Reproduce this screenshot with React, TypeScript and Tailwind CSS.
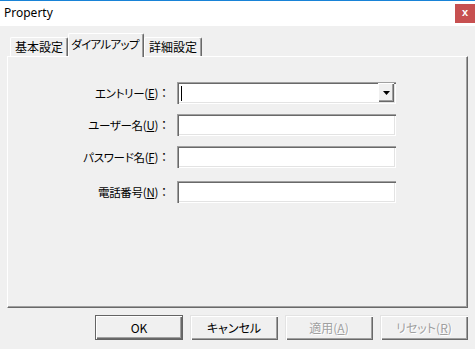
import React from "react";

const jp = "font-['Noto_Sans_CJK_JP','Noto_Sans',sans-serif]";

function Tab({ label, selected, w }: { label: string; selected?: boolean; w: string }) {
  return (
    <div
      className={`${w} ${
        selected ? "h-[24px] -mb-px z-10 pt-[2px]" : "h-[19px] pt-[1px]"
      } relative flex justify-center whitespace-nowrap bg-[#f0f0f0] border-l border-t border-white border-r border-r-[#696969] rounded-tl-[2px] rounded-tr-[2px] shadow-[inset_-1px_0_0_#a0a0a0] text-[12px] leading-[16px] text-black [font-feature-settings:'palt']`}
    >
      <span className={selected ? "text-[11.5px] tracking-[-0.7px] pr-[2px]" : ""}>{label}</span>
    </div>
  );
}

const sunken =
  "bg-white shadow-[inset_1px_1px_0_#a0a0a0,inset_2px_2px_0_#696969,inset_-1px_-1px_0_#ffffff,inset_-2px_-2px_0_#e3e3e3]";

function Row({ label, u, children, mt }: { label: string; u: string; children: React.ReactNode; mt: string }) {
  return (
    <div className={`flex items-center ${mt}`}>
      <div className="w-[162px] text-right text-[11.5px] leading-[16px] text-black whitespace-nowrap">
        <span className="[font-feature-settings:'palt'] tracking-[-0.3px]">
          {label}(<span className="underline">{u}</span>)
        </span>
        <span className="text-[12px]">：</span>
      </div>
      <div className="ml-[7px]">{children}</div>
    </div>
  );
}

function Btn({ label, u, disabled, def }: { label: string; u?: string; disabled?: boolean; def?: boolean }) {
  return (
    <div
      className={`w-[88px] h-[25px] flex items-center justify-center text-[12px] [font-feature-settings:'palt'] ${
        def
          ? "border border-[#646464] shadow-[inset_1px_1px_0_#ffffff,inset_-1px_-1px_0_#696969,inset_-2px_-2px_0_#a0a0a0]"
          : "shadow-[inset_1px_1px_0_#e3e3e3,inset_2px_2px_0_#ffffff,inset_-1px_-1px_0_#696969,inset_-2px_-2px_0_#a0a0a0]"
      } ${disabled ? "text-[#a0a0a0] [text-shadow:1px_1px_0_#ffffff]" : "text-black"}`}
    >
      {label}
      {u && (
        <>
          (<span className="underline">{u}</span>)
        </>
      )}
    </div>
  );
}

export default function App() {
  return (
    <div className={`w-[475px] h-[349px] bg-[#f0f0f0] flex flex-col overflow-hidden ${jp}`}>
      <div className="h-[26px] shrink-0 bg-white border-t border-[#1883d7] flex items-start justify-between">
        <span className="pl-[4px] pt-[5px] text-[12px] leading-[14px] text-black font-['Noto_Sans',sans-serif]">
          Property
        </span>
        <div className="mt-[3px] w-[20px] h-[19px] bg-[#c75050] text-white flex items-center justify-center text-[11px] font-bold leading-none font-['Liberation_Sans',sans-serif] pb-[2px]">
          x
        </div>
      </div>
      <div className="px-[7px] pt-[7px] flex flex-col">
        <div className="flex items-end h-[23px] ml-[3px] relative z-10">
          <Tab label="基本設定" w="w-[58px]" />
          <Tab label="ダイアルアップ" w="w-[76px]" selected />
          <Tab label="詳細設定" w="w-[58px]" />
        </div>
        <div className="h-[252px] border-l border-t border-white border-r border-b border-r-[#696969] border-b-[#696969] shadow-[inset_-1px_-1px_0_#a0a0a0] flex flex-col">
          <Row label="エントリー" u="E" mt="mt-[25px]">
            <div className={`w-[219px] h-[22px] ${sunken} relative flex items-center`}>
              <div className="ml-[4px] w-px h-[15px] bg-black" />
              <div className="absolute right-[2px] top-[1px] w-[16px] h-[19px] bg-[#f0f0f0] shadow-[inset_1px_1px_0_#ffffff,inset_-1px_-1px_0_#696969,inset_-2px_-2px_0_#a0a0a0] flex items-center justify-center">
                <svg width="7" height="4" viewBox="0 0 7 4">
                  <path d="M0 0h7L3.5 4z" fill="#000" />
                </svg>
              </div>
            </div>
          </Row>
          <Row label="ユーザー名" u="U" mt="mt-[10px]">
            <div className={`w-[219px] h-[22px] ${sunken}`} />
          </Row>
          <Row label="パスワード名" u="F" mt="mt-[10px]">
            <div className={`w-[219px] h-[22px] ${sunken}`} />
          </Row>
          <Row label="電話番号" u="N" mt="mt-[13px]">
            <div className={`w-[219px] h-[22px] ${sunken}`} />
          </Row>
        </div>
      </div>
      <div className="flex justify-end gap-[7px] pr-[7px] mt-[7px]">
        <Btn label="OK" def />
        <Btn label="キャンセル" />
        <Btn label="適用" u="A" disabled />
        <Btn label="リセット" u="R" disabled />
      </div>
    </div>
  );
}
